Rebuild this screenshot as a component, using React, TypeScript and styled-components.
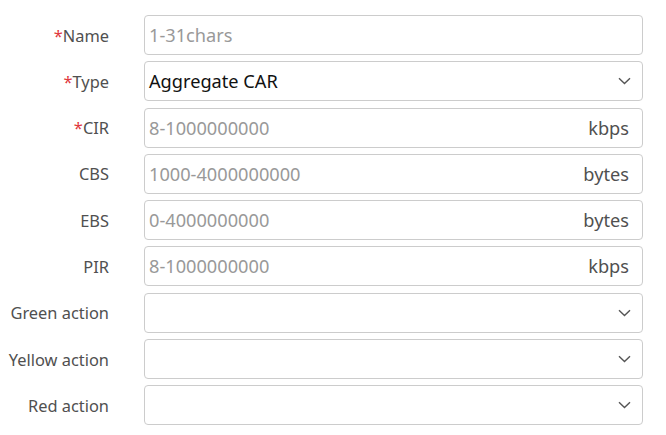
import { Fragment } from "react";
import styled, { createGlobalStyle } from "styled-components";

const GlobalStyle = createGlobalStyle`
  html, body {
    margin: 0;
    padding: 0;
    background: #ffffff;
  }
  body {
    font-family: "Noto Sans", "Liberation Sans", Arial, sans-serif;
  }
  * {
    box-sizing: border-box;
  }
`;

type Field = {
  label: string;
  required?: boolean;
  kind: "text" | "select";
  placeholder?: string;
  value?: string;
  unit?: string;
};

const fields: Field[] = [
  { label: "Name", required: true, kind: "text", placeholder: "1-31chars" },
  { label: "Type", required: true, kind: "select", value: "Aggregate CAR" },
  { label: "CIR", required: true, kind: "text", placeholder: "8-1000000000", unit: "kbps" },
  { label: "CBS", kind: "text", placeholder: "1000-4000000000", unit: "bytes" },
  { label: "EBS", kind: "text", placeholder: "0-4000000000", unit: "bytes" },
  { label: "PIR", kind: "text", placeholder: "8-1000000000", unit: "kbps" },
  { label: "Green action", kind: "select" },
  { label: "Yellow action", kind: "select" },
  { label: "Red action", kind: "select" },
];

const Page = styled.div`
  padding: 15px 0 0 0;
`;

const Form = styled.div`
  display: grid;
  grid-template-columns: 109px 499px;
  column-gap: 35px;
  row-gap: 6.3px;
  align-items: center;
`;

const Label = styled.label`
  font-size: 16.4px;
  color: #505050;
  text-align: right;
  white-space: nowrap;
`;

const Star = styled.span`
  color: #e0383e;
`;

const Box = styled.div`
  height: 40px;
  border: 1px solid #cccccc;
  border-radius: 4px;
  display: flex;
  align-items: center;
  padding: 0 13px 0 4px;
  font-size: 18.2px;
  background: #ffffff;
`;

const Value = styled.span<{ $placeholder?: boolean }>`
  flex: 1;
  color: ${(p) => (p.$placeholder ? "#999999" : "#111111")};
  white-space: nowrap;
`;

const Unit = styled.span`
  color: #505050;
`;

const Chevron = styled.svg`
  width: 13px;
  height: 8px;
  margin-right: -2px;
`;

const Arrow = () => (
  <Chevron viewBox="0 0 13 8">
    <path d="M1 1.2 L6.5 6.5 L12 1.2" fill="none" stroke="#555555" strokeWidth="1.4" />
  </Chevron>
);

const App = () => {
  return (
    <Page>
      <GlobalStyle />
      <Form>
        {fields.map((f) => (
          <Fragment key={f.label}>
            <Label>
              {f.required && <Star>*</Star>}
              {f.label}
            </Label>
            <Box>
              <Value $placeholder={!f.value}>{f.value || f.placeholder}</Value>
              {f.unit && <Unit>{f.unit}</Unit>}
              {f.kind === "select" && <Arrow />}
            </Box>
          </Fragment>
        ))}
      </Form>
    </Page>
  );
};

export default App;
